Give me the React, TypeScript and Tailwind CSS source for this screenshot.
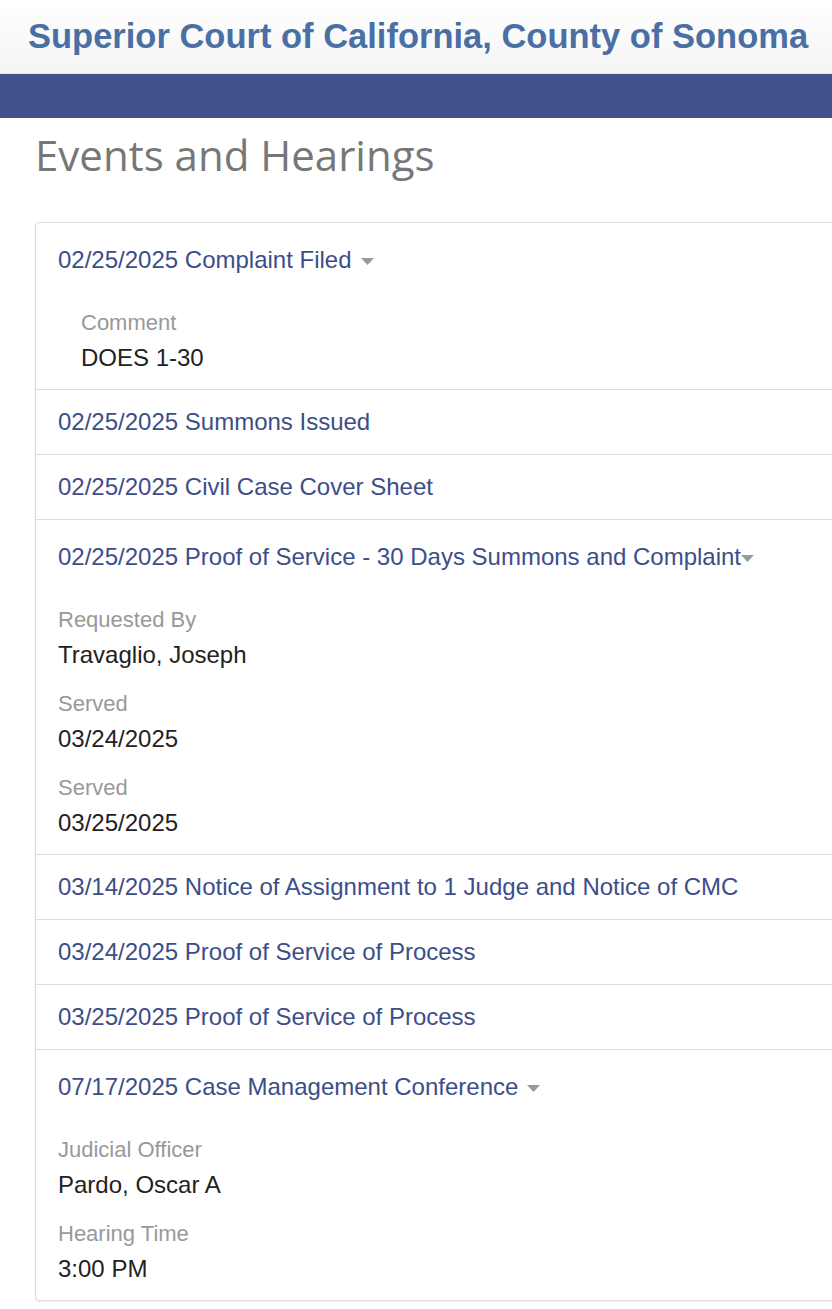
import { useState } from 'react'

interface Field {
  label: string
  value: string
}

interface CaseEvent {
  date: string
  title: string
  fields?: Field[]
  indent?: boolean
  tightCaret?: boolean
}

const events: CaseEvent[] = [
  {
    date: '02/25/2025',
    title: 'Complaint Filed',
    fields: [{ label: 'Comment', value: 'DOES 1-30' }],
    indent: true,
  },
  { date: '02/25/2025', title: 'Summons Issued' },
  { date: '02/25/2025', title: 'Civil Case Cover Sheet' },
  {
    date: '02/25/2025',
    title: 'Proof of Service - 30 Days Summons and Complaint',
    tightCaret: true,
    fields: [
      { label: 'Requested By', value: 'Travaglio, Joseph' },
      { label: 'Served', value: '03/24/2025' },
      { label: 'Served', value: '03/25/2025' },
    ],
  },
  { date: '03/14/2025', title: 'Notice of Assignment to 1 Judge and Notice of CMC' },
  { date: '03/24/2025', title: 'Proof of Service of Process' },
  { date: '03/25/2025', title: 'Proof of Service of Process' },
  {
    date: '07/17/2025',
    title: 'Case Management Conference',
    fields: [
      { label: 'Judicial Officer', value: 'Pardo, Oscar A' },
      { label: 'Hearing Time', value: '3:00 PM' },
    ],
  },
]

function Caret({ tight }: { tight?: boolean }) {
  return (
    <svg
      width="13"
      height="7"
      viewBox="0 0 13 7"
      className={`inline-block align-middle ${tight ? 'ml-0' : 'ml-[9px]'}`}
    >
      <path d="M0 0 L13 0 L6.5 7 Z" fill="#999999" />
    </svg>
  )
}

function EventRow({ ev, last }: { ev: CaseEvent; last: boolean }) {
  const [open, setOpen] = useState(true)
  const expandable = !!ev.fields

  return (
    <div className={last ? '' : 'border-b border-[#dddddd]'}>
      <button
        onClick={() => expandable && setOpen(!open)}
        className={`block w-full whitespace-nowrap text-left pl-[22px] text-[24px] leading-[26px] text-[#3c4e8a] ${
          expandable ? 'pt-[24px] pb-[17px]' : 'py-[19px]'
        }`}
      >
        {ev.date} {ev.title}
        {expandable && <Caret tight={ev.tightCaret} />}
      </button>

      {expandable && open && (
        <div className={`pb-[17px] pt-[20px] ${ev.indent ? 'pl-[45px]' : 'pl-[22px]'}`}>
          {ev.fields!.map((f, i) => (
            <div key={i} className={i > 0 ? 'mt-[22px]' : ''}>
              <div className="text-[22px] leading-[26px] text-[#999999]">{f.label}</div>
              <div className="mt-[8px] text-[24px] leading-[28px] text-[#222222]">{f.value}</div>
            </div>
          ))}
        </div>
      )}
    </div>
  )
}

export default function App() {
  return (
    <div className="min-h-[1309px] overflow-hidden bg-white font-['Liberation_Sans',Arial,sans-serif]">
      {/* header */}
      <div className="h-[74px] border-b border-[#e3e3e3] bg-gradient-to-b from-[#ffffff] to-[#f5f5f5] pl-[28px] pt-[16px]">
        <h1 className="whitespace-nowrap text-[34.5px] font-bold leading-[40px] text-[#4a6fa5]">
          Superior Court of California, County of Sonoma
        </h1>
      </div>
      <div className="h-[44px] bg-[#41528c]" />

      <div className="pl-[35px]">
        <h2 className="pt-[12px] font-['Open_Sans',sans-serif] text-[42px] leading-[50px] text-[#777777]">
          Events and Hearings
        </h2>

        <div className="mt-[42px] -mr-[10px] rounded-[4px] border border-[#dddddd] shadow-[0_1px_2px_rgba(0,0,0,0.08)]">
          {events.map((ev, i) => (
            <EventRow key={i} ev={ev} last={i === events.length - 1} />
          ))}
        </div>
      </div>
    </div>
  )
}
